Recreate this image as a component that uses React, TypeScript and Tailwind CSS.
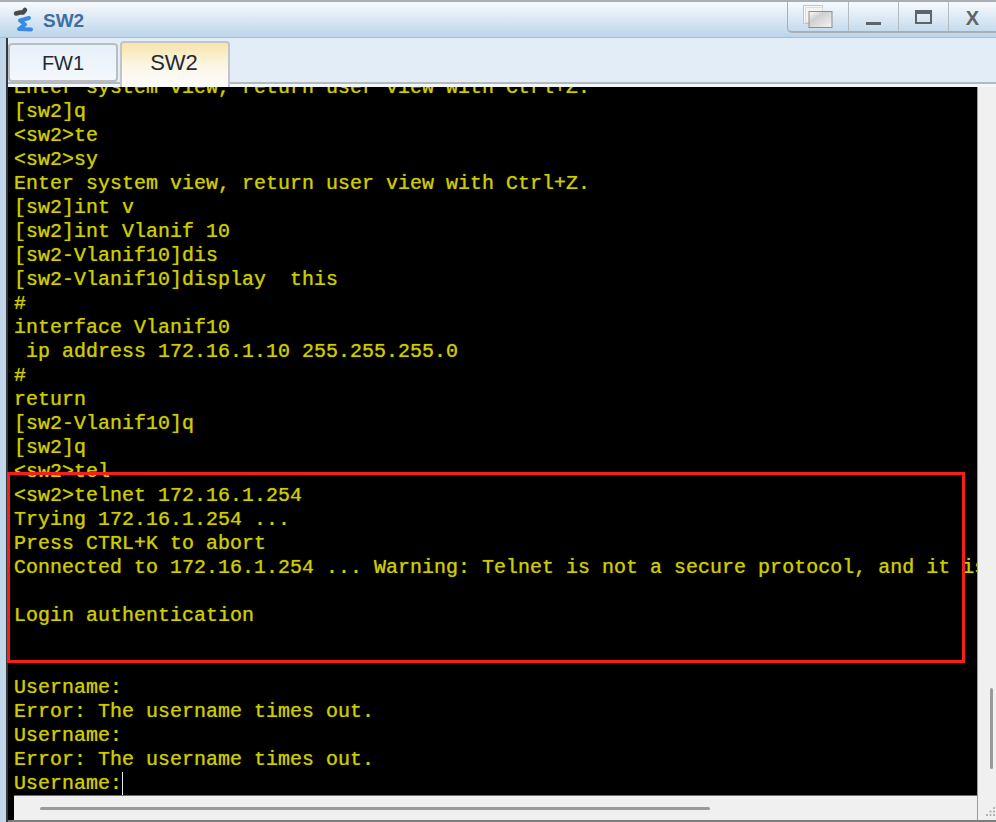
const lines = [
  "Enter system view, return user view with Ctrl+Z.",
  "[sw2]q",
  "<sw2>te",
  "<sw2>sy",
  "Enter system view, return user view with Ctrl+Z.",
  "[sw2]int v",
  "[sw2]int Vlanif 10",
  "[sw2-Vlanif10]dis",
  "[sw2-Vlanif10]display  this",
  "#",
  "interface Vlanif10",
  " ip address 172.16.1.10 255.255.255.0",
  "#",
  "return",
  "[sw2-Vlanif10]q",
  "[sw2]q",
  "<sw2>tel",
  "<sw2>telnet 172.16.1.254",
  "Trying 172.16.1.254 ...",
  "Press CTRL+K to abort",
  "Connected to 172.16.1.254 ... Warning: Telnet is not a secure protocol, and it is",
  "",
  "Login authentication",
  "",
  "",
  "Username:",
  "Error: The username times out.",
  "Username:",
  "Error: The username times out.",
];

function AppIcon() {
  return (
    <svg width="22" height="28" viewBox="0 0 22 28" aria-hidden>
      <path d="M3 7.5 L7 6.5 L10 6.5 L12 4" stroke="#4a4a4a" strokeWidth="4.5" strokeLinecap="round" strokeLinejoin="round" fill="none" />
      <path d="M16 12 L7 14.5 L12 18.5 L6 23 L18 23.5" stroke="#3a8ae0" strokeWidth="4" strokeLinejoin="round" strokeLinecap="round" fill="none" />
    </svg>
  );
}

function RestoreIcon() {
  return (
    <svg width="32" height="24" viewBox="0 0 32 24" aria-hidden>
      <defs>
        <linearGradient id="restoreFront" x1="0" y1="0" x2="1" y2="1">
          <stop offset="0" stopColor="#ffffff" />
          <stop offset="0.35" stopColor="#cfcfcf" />
          <stop offset="1" stopColor="#f4f4f4" />
        </linearGradient>
      </defs>
      <rect x="1.5" y="0.5" width="19" height="18" fill="#fafafa" stroke="#c4c4c4" />
      <rect x="3.5" y="2.5" width="17" height="15" fill="#f4f4f4" stroke="#dcdcdc" />
      <rect x="7" y="6.5" width="23" height="16" fill="url(#restoreFront)" stroke="#8d8d8d" />
    </svg>
  );
}

export default function App() {
  return (
    <div className="relative flex h-[822px] w-[996px] flex-col overflow-hidden bg-[#e2edf8] font-['Liberation_Sans',sans-serif]">
      <div className="flex h-[38px] shrink-0 items-start justify-between border-t-2 border-b border-t-[#a9aeb4] border-b-[#a9bccd] bg-gradient-to-b from-[#f7fafd] to-[#bcd5ea] pl-[13px]">
        <div className="flex items-start gap-2">
          <div className="pt-[4px]">
            <AppIcon />
          </div>
          <span className="pt-[8px] text-[19px] font-bold leading-[22px] text-[#3f6f9f]">SW2</span>
        </div>
        <div className="flex h-[31px] items-stretch rounded-bl-[5px] border-b-2 border-l border-[#a9aeb4] text-[#5f6468]">
          <div className="flex w-[61px] items-start justify-center border-r border-[#b5bbc1] pt-[3px]">
            <RestoreIcon />
          </div>
          <div className="flex w-[50px] items-end justify-center border-r border-[#b5bbc1] pb-[6px]">
            <div className="h-[3px] w-[15px] bg-[#5f6468]" />
          </div>
          <div className="flex w-[50px] items-start justify-center border-r border-[#b5bbc1] pt-[8px]">
            <div className="h-[14px] w-[17px] border-2 border-t-4 border-[#5f6468]" />
          </div>
          <div className="flex w-[47px] items-start justify-center pt-[4px] text-[20px] font-bold leading-[24px]">X</div>
        </div>
      </div>

      <div className="flex min-h-0 flex-1 bg-[#c3d7ea] pl-[6px]">
        <div className="w-0.5 shrink-0 bg-[#33383c]" />
        <div className="flex min-w-0 flex-1 flex-col bg-[#e2edf8]">
          <div className="flex h-[46px] shrink-0 items-end gap-0.5 border-b-2 border-[#b4b9be]">
            <div className="flex h-[39px] w-[110px] items-center justify-center rounded-[4px] border-2 border-[#b9bec3] bg-gradient-to-b from-[#e6f0fa] to-[#f4f8fc] text-[20px] text-[#222a33]">
              FW1
            </div>
            <div className="relative z-10 -mb-[5px] flex h-[46px] w-[110px] items-start justify-center rounded-t-[4px] border-2 border-b-0 border-[#c2c5c8] bg-gradient-to-b from-[#f8e4a8] via-[#fbf6e4] to-[#fbfcfe] pt-[6px] pr-0.5 text-[22px] leading-[28px] text-[#222a33]">
              SW2
            </div>
          </div>
          <div className="h-[3px] shrink-0 bg-[#f4f7fa]" />

          <div className="flex min-h-0 flex-1 bg-[#f0f0f0]">
            <div className="flex min-w-0 flex-1 flex-col bg-black">
              <div className="min-h-0 flex-1 overflow-hidden pl-1.5">
                <div className="-mt-[11px] whitespace-pre font-['Liberation_Mono',monospace] text-[20px] leading-[24px] text-[#cccc00] [text-shadow:0_0_1px_#a8a800]">
                  {lines.map((line, i) => (
                    <div key={i} className="h-6">
                      {line}
                    </div>
                  ))}
                  <div className="flex h-6">
                    Username:
                    <span className="h-6 w-px bg-[#e8e8e8]" />
                  </div>
                </div>
              </div>
              <div className="h-[25px] shrink-0 pl-1.5">
                <div className="h-full border-t border-[#6d6d6d] bg-[#f0f0f0] pl-[26px] pt-[11px]">
                  <div className="h-[3px] w-[670px] rounded-full bg-[#9a9a9a]" />
                </div>
              </div>
            </div>
            <div className="relative w-[19px] shrink-0 border-l border-[#9a9a9a] pl-3 pt-[601px]">
              <div className="h-[81px] w-[3px] rounded-full bg-[#9a9a9a]" />
              <svg className="absolute bottom-[3px] right-0" width="10" height="10" viewBox="0 0 10 10" aria-hidden>
                <g fill="#b4b4b4">
                  <rect x="0" y="7" width="2" height="2" />
                  <rect x="3.5" y="7" width="2" height="2" />
                  <rect x="7" y="7" width="2" height="2" />
                  <rect x="3.5" y="3.5" width="2" height="2" />
                  <rect x="7" y="3.5" width="2" height="2" />
                  <rect x="7" y="0" width="2" height="2" />
                </g>
              </svg>
            </div>
          </div>
          <div className="h-0.5 shrink-0 bg-[#7d7d7d]" />
        </div>
      </div>

      <div className="absolute left-[7px] top-[472px] h-[191px] w-[958px] border-[3px] border-[#f5201a]" />
    </div>
  );
}
